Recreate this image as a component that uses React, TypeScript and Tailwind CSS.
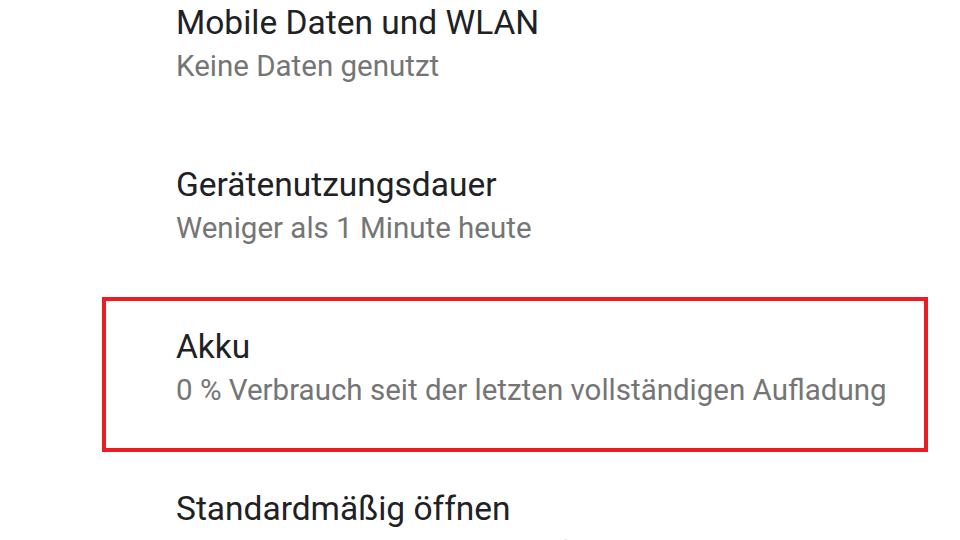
import React from "react";

const items = [
  { title: "Mobile Daten und WLAN", sub: "Keine Daten genutzt" },
  { title: "Gerätenutzungsdauer", sub: "Weniger als 1 Minute heute" },
  { title: "Akku", sub: "0 % Verbrauch seit der letzten vollständigen Aufladung", marked: true },
  { title: "Standardmäßig öffnen", sub: "Keine Standardeinstellungen festgelegt" },
];

export default function App() {
  return (
    <div className="w-[960px] h-[540px] overflow-hidden bg-white font-['Roboto','Noto_Sans',sans-serif]">
      <div className="mt-[-27px] flex flex-col">
        {items.map((it) => (
          <div key={it.title} className="relative h-[162px] shrink-0 pl-[176px] pt-[30px]">
            <div className="text-[33.5px] leading-[40px] text-[#202124]">{it.title}</div>
            <div className="mt-[5px] text-[29.5px] leading-[36px] text-[#757575]">{it.sub}</div>
            {it.marked && (
              <div className="absolute left-[102px] top-0 h-[155px] w-[826px] border-4 border-[#ec1c24]" />
            )}
          </div>
        ))}
      </div>
    </div>
  );
}
